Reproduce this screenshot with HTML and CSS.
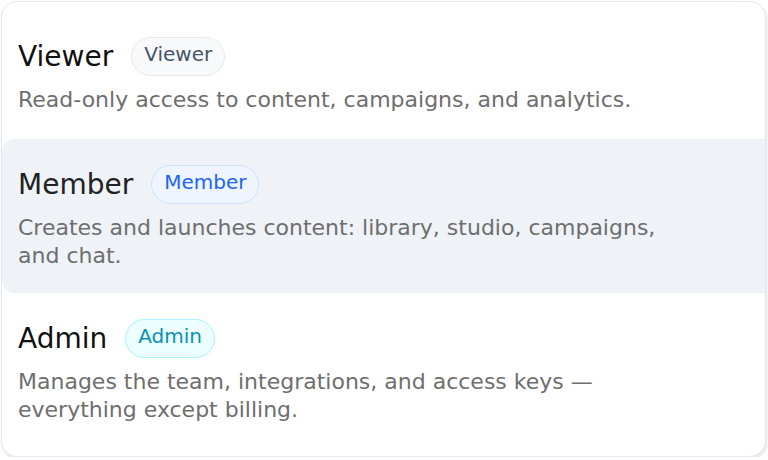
FILE: index.html
```html
<!DOCTYPE html>
<html lang="en">
<head>
    <meta charset="UTF-8">
    <title>Roles</title>
    <link rel="stylesheet" href="styles.css">
</head>
<body>
    <div class="card">
        <div class="role">
            <div class="role-head">
                <span class="role-name">Viewer</span>
                <span class="badge badge-viewer">Viewer</span>
            </div>
            <p class="role-desc">Read-only access to content, campaigns, and analytics.</p>
        </div>
        <div class="role active">
            <div class="role-head">
                <span class="role-name">Member</span>
                <span class="badge badge-member">Member</span>
            </div>
            <p class="role-desc">Creates and launches content: library, studio, campaigns, and chat.</p>
        </div>
        <div class="role">
            <div class="role-head">
                <span class="role-name">Admin</span>
                <span class="badge badge-admin">Admin</span>
            </div>
            <p class="role-desc">Manages the team, integrations, and access keys — everything except billing.</p>
        </div>
    </div>
</body>
</html>
```

FILE: styles.css
```css
body {
    font-family: "DejaVu Sans", sans-serif;
    background-color: #fff;
    margin: 0;
    padding: 1px 2px 0 1px;
}
.card {
    background-color: #fff;
    border: 1px solid #e2e8f0;
    border-radius: 16px;
    padding: 9px 0;
    box-shadow: 1px 2px 3px rgba(100, 116, 139, 0.2);
    overflow: hidden;
}
.role {
    box-sizing: border-box;
    min-height: 128px;
    padding: 26px 16px 24px 16px;
    border-radius: 12px 0 0 12px;
}
.role.active {
    background-color: #eff3f8;
}
.role-head {
    display: flex;
    align-items: center;
    gap: 18px;
}
.role-name {
    font-size: 28px;
    color: #111;
}
.role.active .role-name {
    color: #222;
}
.badge {
    font-size: 20px;
    line-height: 23px;
    padding: 5px 12px 9px 12px;
    border-radius: 999px;
    border: 1px solid #e5eaf0;
    background-color: #f7f9fb;
    color: #475569;
}
.badge-member {
    background-color: #eef5ff;
    border-color: #cfe0fb;
    color: #1d64f2;
}
.badge-admin {
    background-color: #ecfeff;
    border-color: #a5f3fc;
    color: #0891b2;
}
.role-desc {
    margin: 10px 0 0 0;
    max-width: 660px;
    font-size: 22px;
    line-height: 27.5px;
    color: #6e6e6e;
}
```
